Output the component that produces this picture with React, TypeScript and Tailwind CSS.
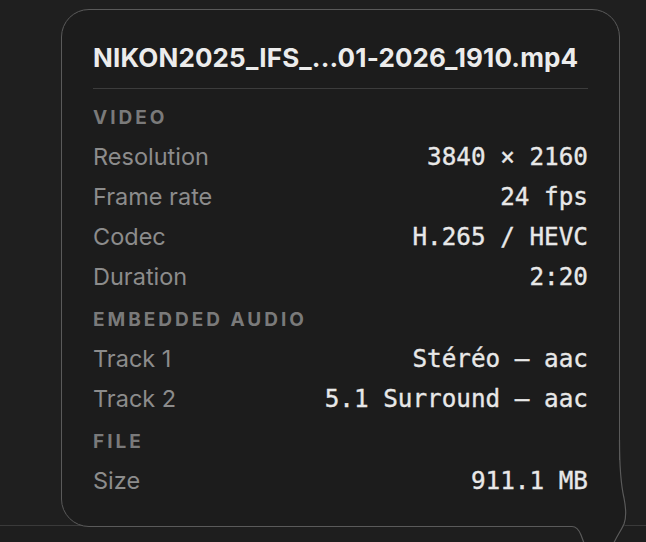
import React from "react";

type Row = { label: string; value: string };
type Section = { title: string; rows: Row[] };

const sections: Section[] = [
  {
    title: "Video",
    rows: [
      { label: "Resolution", value: "3840 × 2160" },
      { label: "Frame rate", value: "24 fps" },
      { label: "Codec", value: "H.265 / HEVC" },
      { label: "Duration", value: "2:20" },
    ],
  },
  {
    title: "Embedded Audio",
    rows: [
      { label: "Track 1", value: "Stéréo — aac" },
      { label: "Track 2", value: "5.1 Surround — aac" },
    ],
  },
  {
    title: "File",
    rows: [{ label: "Size", value: "911.1 MB" }],
  },
];

// tail of the popover, drawn over its square bottom-right corner
const PopoverTail = () => (
  <svg
    className="absolute left-[560px] top-[440px]"
    width="86"
    height="111"
    viewBox="0 0 86 111"
  >
    <path
      d="M57 20 L60.5 20 C61 45 67 60 67 76 C66 88 57 97 50 111 L28 111 C24 100 20 88 13 87.6 L0 87.6 L0 84 L57 84 Z"
      fill="#1c1c1c"
    />
    <path
      d="M59.5 0 C59.5 25 61 45 64 58 C66 68 67 76 64 84 C61 91 56 97 50 111"
      fill="none"
      stroke="#5a5a5a"
      strokeWidth="1.2"
    />
    <path
      d="M0 86.5 L12 86.5 C16 86.5 19 90 21 95 L27 111"
      fill="none"
      stroke="#5a5a5a"
      strokeWidth="1.2"
    />
  </svg>
);

const InfoSection = ({ section, first }: { section: Section; first: boolean }) => (
  <div className={first ? "" : "mt-[5px]"}>
    <div className="h-[37px] flex items-center text-[19px] font-bold uppercase tracking-[3px] text-[#7a7a7a]">
      {section.title}
    </div>
    {section.rows.map((row) => (
      <div key={row.label} className="h-[40px] flex items-center justify-between">
        <span className="text-[23.5px] text-[#8c8c8c]">{row.label}</span>
        <span className="text-[24.3px] text-[#e8e8e8] [-webkit-text-stroke:0.35px_#e8e8e8] font-['DejaVu_Sans_Mono',monospace]">
          {row.value}
        </span>
      </div>
    ))}
  </div>
);

export default function App() {
  return (
    <div className="relative w-[646px] h-[542px] overflow-hidden bg-[#1f1f1f] font-['Inter',sans-serif]">
      {/* background toolbar edge */}
      <div className="h-[525px]" />
      <div className="h-[17px] border-t border-[#3a3a3a] bg-[#1e1e1e]" />

      {/* info popover */}
      <div className="absolute left-[61px] top-[9px] w-[559px] h-[518px] rounded-[28px] rounded-br-none border border-[#5a5a5a] bg-[#1c1c1c] px-[31px] pt-[31px]">
        <div className="h-[32px] flex items-center text-[26px] font-bold tracking-[0.15px] text-[#ececec] whitespace-nowrap">
          NIKON2025_IFS_...01-2026_1910.mp4
        </div>
        <div className="mt-[15px] h-px bg-[#3c3c3c]" />
        <div className="mt-[11px]">
          {sections.map((s, i) => (
            <InfoSection key={s.title} section={s} first={i === 0} />
          ))}
        </div>
      </div>
      <PopoverTail />
    </div>
  );
}
